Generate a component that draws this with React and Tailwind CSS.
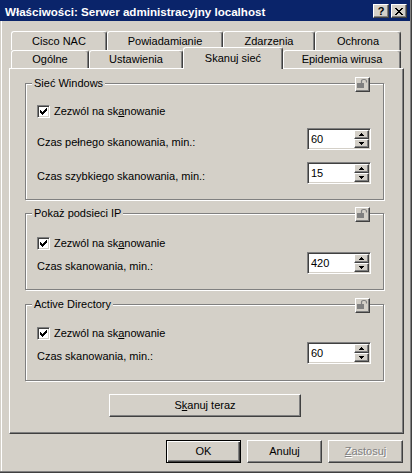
const raised =
  "border border-[#404040] border-t-white border-l-white shadow-[inset_-1px_-1px_#808080] bg-[#d4d0c8]";
const sunken =
  "border border-white border-t-[#808080] border-l-[#808080] shadow-[inset_1px_1px_#404040,inset_-1px_-1px_#d4d0c8]";

function CaptionButton({ children }) {
  return (
    <div className={`flex h-[14px] w-[16px] items-center justify-center text-[11px] font-bold leading-none text-black ${raised}`}>
      {children}
    </div>
  );
}

function Tab({ children, className = "" }) {
  return (
    <div
      className={`flex items-center justify-center rounded-t-[3px] border-t border-l border-r border-white border-r-[#404040] bg-[#d4d0c8] shadow-[inset_-1px_0_#808080] ${className}`}
    >
      {children}
    </div>
  );
}

function LockButton() {
  return (
    <div className={`absolute right-[13px] top-[-7px] h-[15px] w-[15px] ${raised}`}>
      <svg width="13" height="13" viewBox="0 0 13 13" className="block">
        <rect x="1" y="5" width="7" height="5" fill="#808080" />
        <path d="M5.5 5V3.5Q5.5 1.5 7.5 1.5H8.5Q10.5 1.5 10.5 3.5V4.5" fill="none" stroke="#808080" strokeWidth="1.2" />
      </svg>
    </div>
  );
}

function Checkbox() {
  return (
    <div className={`relative h-[13px] w-[13px] shrink-0 bg-white ${sunken}`}>
      <svg width="9" height="9" viewBox="0 0 9 9" className="absolute left-px top-px" shapeRendering="crispEdges">
        <path d="M1 3h1v3H1zM2 4h1v3H2zM3 5h1v3H3zM4 4h1v3H4zM5 3h1v3H5zM6 2h1v3H6zM7 1h1v3H7z" fill="#000" />
      </svg>
    </div>
  );
}

function CheckRow() {
  return (
    <div className="flex items-center gap-[4px]">
      <Checkbox />
      <span>
        Zezwól na sk<u>a</u>nowanie
      </span>
    </div>
  );
}

function SpinButton({ up }) {
  return (
    <div className={`flex flex-1 items-center justify-center ${raised}`}>
      <svg width="5" height="3" viewBox="0 0 5 3" shapeRendering="crispEdges">
        {up ? (
          <path d="M2 0h1v1h1v1h1v1H0V2h1V1h1z" fill="#000" />
        ) : (
          <path d="M0 0h5v1H4v1H3v1H2V2H1V1H0z" fill="#000" />
        )}
      </svg>
    </div>
  );
}

function SpinRow({ label, value, className = "" }) {
  return (
    <div className={`flex items-start justify-between ${className}`}>
      <span className="mt-[8px]">{label}</span>
      <div className={`flex h-[22px] w-[64px] bg-white p-px ${sunken}`}>
        <div className="flex flex-1 items-center pl-[2px]">{value}</div>
        <div className="flex w-[15px] flex-col">
          <SpinButton up />
          <SpinButton />
        </div>
      </div>
    </div>
  );
}

function Group({ title, className = "", children }) {
  return (
    <div
      className={`relative w-[359px] border border-[#808080] pl-[11px] pr-[12px] shadow-[inset_1px_1px_#fff,1px_1px_#fff] ${className}`}
    >
      <span className="absolute left-[6px] top-[-7px] bg-[#d4d0c8] px-[2px]">{title}</span>
      <LockButton />
      {children}
    </div>
  );
}

function Button({ children, isDefault, disabled, className = "" }) {
  const frame = isDefault
    ? "border border-black bg-[#d4d0c8] shadow-[inset_1px_1px_#fff,inset_-1px_-1px_#404040,inset_-2px_-2px_#808080]"
    : raised;
  return (
    <div
      className={`flex h-[23px] items-center justify-center ${frame} ${
        disabled ? "text-[#808080] [text-shadow:1px_1px_0_#fff]" : ""
      } ${className}`}
    >
      {children}
    </div>
  );
}

export default function App() {
  return (
    <div className="h-[473px] w-[412px] border-r border-b border-[#404040] bg-[#d4d0c8] text-[11px] leading-[13px] text-black [font-family:'Liberation_Sans',Arial,sans-serif]">
      <div className="flex h-full flex-col border-r border-b border-[#808080]">
        {/* title bar */}
        <div className="flex h-[21px] shrink-0 items-center justify-between bg-[#0a246a] pl-[5px] pr-[3px] pt-px">
          <span className="text-[11.6px] font-bold text-white">Właściwości: Serwer administracyjny localhost</span>
          <div className="flex gap-[2px]">
            <CaptionButton>?</CaptionButton>
            <CaptionButton>
              <svg width="8" height="7" viewBox="0 0 8 7" shapeRendering="crispEdges">
                <path
                  d="M0 0h2v1H0zM6 0h2v1H6zM1 1h2v1H1zM5 1h2v1H5zM2 2h4v1H2zM3 3h2v1H3zM2 4h4v1H2zM1 5h2v1H1zM5 5h2v1H5zM0 6h2v1H0zM6 6h2v1H6z"
                  fill="#000"
                />
              </svg>
            </CaptionButton>
          </div>
        </div>

        <div className="ml-px flex-1 border-l border-white pl-[7px] pt-[10px]">
          {/* tabs */}
          <div className="ml-[2px]">
            <div className="flex h-[19px]">
              <Tab className="w-[96px]">Cisco NAC</Tab>
              <Tab className="w-[116px]">Powiadamianie</Tab>
              <Tab className="w-[92px]">Zdarzenia</Tab>
              <Tab className="w-[86px]">Ochrona</Tab>
            </div>
            <div className="flex h-[18px]">
              <Tab className="w-[78px]">Ogólne</Tab>
              <Tab className="w-[94px]">Ustawienia</Tab>
              <Tab className="relative z-10 -mt-[3px] h-[22px] w-[100px] self-start">Skanuj sieć</Tab>
              <Tab className="w-[118px]">Epidemia wirusa</Tab>
            </div>
          </div>

          {/* page */}
          <div className="flex h-[366px] w-[395px] flex-col border border-[#404040] border-t-white border-l-white pl-[15px] pt-[14px] shadow-[inset_-1px_-1px_#808080]">
            <Group title="Sieć Windows" className="pt-[21px] pb-[15px]">
              <CheckRow />
              <SpinRow label="Czas pełnego skanowania, min.:" value="60" className="mt-[10px]" />
              <SpinRow label="Czas szybkiego skanowania, min.:" value="15" className="mt-[12px]" />
            </Group>

            <Group title="Pokaż podsieci IP" className="mt-[13px] pt-[23px] pb-[15px]">
              <CheckRow />
              <SpinRow label="Czas skanowania, min.:" value="420" className="mt-[2px]" />
            </Group>

            <Group title="Active Directory" className="mt-[14px] pt-[22px] pb-[16px]">
              <CheckRow />
              <SpinRow label="Czas skanowania, min.:" value="60" className="mt-[2px]" />
            </Group>

            <Button className="mt-[13px] ml-[84px] w-[192px]">
              S<u>k</u>anuj teraz
            </Button>
          </div>

          {/* dialog buttons */}
          <div className="mt-[6px] flex w-[395px] justify-end gap-[6px] pr-px">
            <Button isDefault className="w-[75px]">
              OK
            </Button>
            <Button className="w-[75px]">Anuluj</Button>
            <Button disabled className="w-[75px]">
              <span>
                <u>Z</u>astosuj
              </span>
            </Button>
          </div>
        </div>
      </div>
    </div>
  );
}
